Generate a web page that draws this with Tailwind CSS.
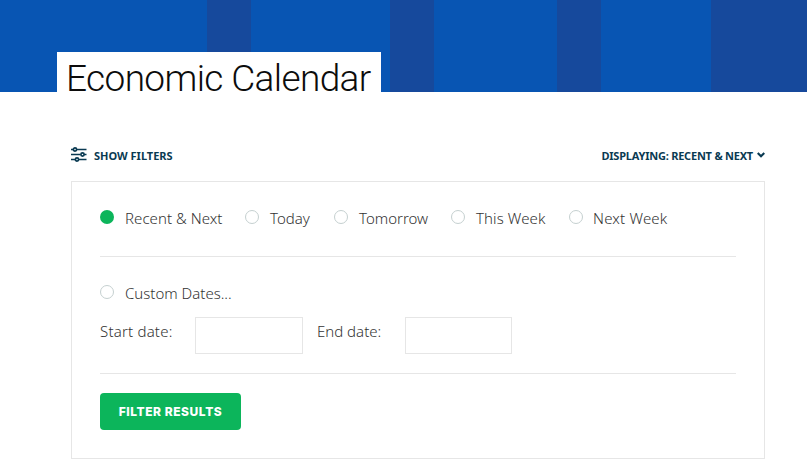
<!DOCTYPE html>
<html lang="en">
    <head>
        <meta charset="UTF-8">
        <meta name="viewport" content="width=device-width, initial-scale=1.0">
        <title>Economic Calendar</title>
        <script src="https://cdn.jsdelivr.net/npm/@tailwindcss/browser@4"></script>
    </head>
    <body class="bg-white overflow-hidden font-['Noto_Sans',sans-serif]">
        <header class="relative h-[92px] bg-[#0855b3]">
            <div class="flex h-full">
                <div class="w-11 ml-[207px] bg-[#16499c]"></div>
                <div class="w-11 ml-[139px] bg-[#16499c]"></div>
                <div class="w-11 ml-[123px] bg-[#16499c]"></div>
                <div class="flex-1 ml-[110px] bg-[#16499c]"></div>
            </div>
            <h1 class="absolute left-[57px] top-[52px] w-[324px] h-[54px] pl-[9px] bg-white text-[#0c0c0c] text-[37px] leading-[54px] tracking-[-0.63px] font-light font-['Roboto',sans-serif] whitespace-nowrap">Economic Calendar</h1>
        </header>

        <main class="ml-[71px] w-[694px] pt-[54px]">
            <div class="flex justify-between items-center h-[19px] text-[#0a3a52] text-[11px] font-bold whitespace-nowrap">
                <button class="flex items-center">
                    <svg class="w-4 h-4 mr-[7px] mb-0.5" viewBox="0 0 16 16" fill="none" stroke="currentColor" stroke-width="1.700">
                        <path d="M0 2.500h2.500M5.500 2.500H15.500M0 7.500h9.500M13 7.500h2.500M0 12.500h4M7.500 12.500h8"/>
                        <circle cx="4" cy="2.500" r="1.600"/>
                        <circle cx="11.500" cy="7.500" r="1.600"/>
                        <circle cx="6" cy="12.500" r="1.600"/>
                    </svg>
                    <span class="pt-0.5">SHOW FILTERS</span>
                </button>
                <button class="flex items-center">
                    <span class="pt-0.5 tracking-[-0.22px]">DISPLAYING: RECENT &amp; NEXT</span>
                    <svg class="w-2 h-[6px] ml-1 mb-0.5" viewBox="0 0 8 6" fill="none" stroke="currentColor" stroke-width="2.200"><path d="M.7 1l3.300 3.300L7.300 1"/></svg>
                </button>
            </div>

            <form class="mt-4 h-[278px] border border-[#e6e6e6] px-7 text-[#333] text-[15px] leading-5 font-light whitespace-nowrap">
                <div class="flex h-[75px] pt-[26px] border-b border-[#e6e6e6]">
                    <label class="flex w-[145px]"><i class="w-3.5 h-3.5 mt-0.5 mr-[11px] rounded-full bg-[#0cb55b]"></i><span class="tracking-[0.05px]">Recent &amp; Next</span></label>
                    <label class="flex w-[89px]"><i class="w-3.5 h-3.5 mt-0.5 mr-[11px] rounded-full border border-[#c5d0d0]"></i><span>Today</span></label>
                    <label class="flex w-[117px]"><i class="w-3.5 h-3.5 mt-0.5 mr-[11px] rounded-full border border-[#c5d0d0]"></i><span>Tomorrow</span></label>
                    <label class="flex w-[118px]"><i class="w-3.5 h-3.5 mt-0.5 mr-[11px] rounded-full border border-[#c5d0d0]"></i><span class="tracking-[0.1px]">This Week</span></label>
                    <label class="flex"><i class="w-3.5 h-3.5 mt-0.5 mr-[10px] rounded-full border border-[#c5d0d0]"></i><span class="tracking-[0.2px]">Next Week</span></label>
                </div>
                <div class="h-[117px] pt-[26px] border-b border-[#e6e6e6]">
                    <label class="flex"><i class="w-3.5 h-3.5 mt-0.5 mr-[11px] rounded-full border border-[#c5d0d0]"></i><span>Custom Dates...</span></label>
                    <div class="flex mt-[14px]">
                        <label class="w-[95px] pt-1"><span class="tracking-[0.2px]">Start date:</span></label>
                        <input type="text" class="w-[108px] h-[37px] border border-[#e6e6e6]">
                        <label class="w-[88px] ml-[14px] pt-1"><span>End date:</span></label>
                        <input type="text" class="w-[107px] h-[37px] border border-[#e6e6e6]">
                    </div>
                </div>
                <button type="button" class="mt-[19px] w-[141px] h-[37px] rounded bg-[#0cb55b] text-white text-[12px] tracking-[0.55px] font-extrabold font-['Inter',sans-serif]"><span>FILTER RESULTS</span></button>
            </form>
        </main>
    </body>
</html>
